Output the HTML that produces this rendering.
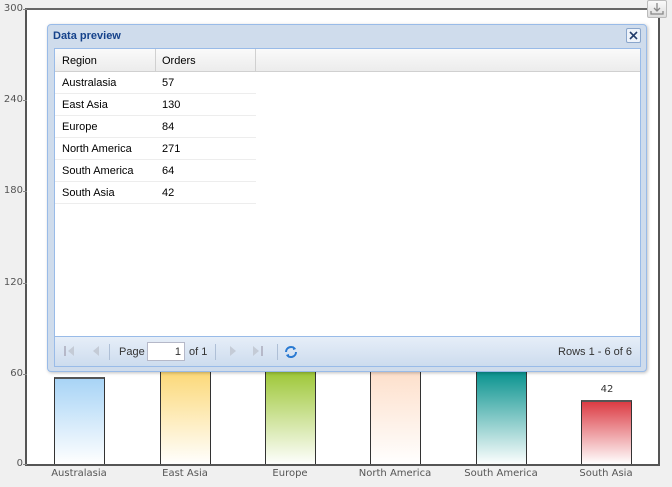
<!DOCTYPE html>
<html><head><style>
*{margin:0;padding:0;box-sizing:border-box}
body{width:672px;height:487px;background:#f0f0f0;font-family:"Liberation Sans",sans-serif;position:relative;overflow:hidden}
.a{position:absolute}
.yl{position:absolute;left:0;width:23px;text-align:right;color:#555;font-family:"DejaVu Sans",sans-serif;font-size:10px}
.tk{position:absolute;left:23px;width:4px;height:1px;background:#888}
.bar{position:absolute;width:51px;border:1px solid #333;border-bottom:none}
.xl{position:absolute;top:468px;font-family:"DejaVu Sans",sans-serif;font-size:10px;color:#555;text-align:center;width:110px}
.row{position:absolute;left:0;height:22px;font-size:11px;color:#000;border-bottom:1px solid #ededed}
.row span{position:absolute;top:5px}
</style></head><body>
<div class="a" style="left:25px;top:8px;width:635px;height:458px;background:#fff;border:2px solid #555;border-top:2px solid #666"></div>
<div class="yl" style="top:3px">300</div><div class="tk" style="top:9px"></div>
<div class="yl" style="top:94px">240</div><div class="tk" style="top:100px"></div>
<div class="yl" style="top:185px">180</div><div class="tk" style="top:191px"></div>
<div class="yl" style="top:277px">120</div><div class="tk" style="top:283px"></div>
<div class="yl" style="top:368px">60</div><div class="tk" style="top:374px"></div>
<div class="yl" style="top:458px">0</div><div class="tk" style="top:464px"></div>
<div class="bar" style="left:54px;top:377px;height:87px;background:linear-gradient(#a8d4f6,#fff);border-top:2px solid #555"></div>
<div class="bar" style="left:160px;top:200px;height:264px;background:linear-gradient(#fcd97a 0,#fcd97a 172px,#fff 264px)"></div>
<div class="bar" style="left:265px;top:200px;height:264px;background:linear-gradient(#9fc83a 0,#9fc83a 172px,#fff 264px)"></div>
<div class="bar" style="left:370px;top:200px;height:264px;background:linear-gradient(#fde0cc 0,#fde0cc 172px,#fff 264px)"></div>
<div class="bar" style="left:476px;top:200px;height:264px;background:linear-gradient(#0c9490 0,#0c9490 172px,#fff 264px)"></div>
<div class="bar" style="left:581px;top:400px;height:64px;background:linear-gradient(#dc3c44,#fff);border-top:2px solid #555"></div>
<div class="a" style="left:596px;top:384px;font-family:'DejaVu Sans',sans-serif;font-size:10px;color:#333;width:22px;text-align:center">42</div>
<div class="xl" style="left:24px">Australasia</div>
<div class="xl" style="left:130px">East Asia</div>
<div class="xl" style="left:235px">Europe</div>
<div class="xl" style="left:340px">North America</div>
<div class="xl" style="left:446px">South America</div>
<div class="xl" style="left:551px">South Asia</div>
<div class="a" style="left:647px;top:0;width:20px;height:18px;border:1px solid #bbb;border-radius:2px;background:linear-gradient(#fafafa,#ddd)">
<svg width="18" height="16" viewBox="0 0 18 16" style="position:absolute;left:0;top:0"><path d="M9 2v8M6 7l3 3 3-3M3 10v3h12v-3" stroke="#888" stroke-width="1.3" fill="none"/></svg></div>
<div class="a" style="left:47px;top:24px;width:600px;height:348px;background:#cfdcec;border:1px solid #99bbe8;border-radius:4px;box-shadow:1px 1px 3px rgba(0,0,0,.25)">
<div class="a" style="left:5px;top:5px;font-size:11px;font-weight:bold;color:#15428b">Data preview</div>
<div class="a" style="left:578px;top:3px;width:15px;height:15px;border:1px solid #8aa6cc;background:#eef3fa;border-radius:2px">
<svg width="13" height="13" viewBox="0 0 13 13" style="position:absolute;left:0;top:0"><path d="M3 3l7 7M10 3l-7 7" stroke="#223c6a" stroke-width="1.6"/></svg></div>
<div class="a" style="left:6px;top:23px;width:587px;height:289px;background:#fff;border:1px solid #99bbe8;overflow:hidden">
<div class="a" style="left:0;top:0;width:587px;height:23px;background:linear-gradient(#fafafa,#ececec);border-bottom:1px solid #d0d0d0;font-size:11px">
<span class="a" style="left:7px;top:6px">Region</span><div class="a" style="left:100px;top:0;width:1px;height:22px;background:#d0d0d0"></div>
<span class="a" style="left:107px;top:6px">Orders</span><div class="a" style="left:200px;top:0;width:1px;height:22px;background:#d0d0d0"></div></div>
<div class="a" style="left:0;top:23px;width:201px">
<div class="row" style="top:0;width:201px"><span style="left:7px">Australasia</span><span style="left:107px">57</span></div>
<div class="row" style="top:22px;width:201px"><span style="left:7px">East Asia</span><span style="left:107px">130</span></div>
<div class="row" style="top:44px;width:201px"><span style="left:7px">Europe</span><span style="left:107px">84</span></div>
<div class="row" style="top:66px;width:201px"><span style="left:7px">North America</span><span style="left:107px">271</span></div>
<div class="row" style="top:88px;width:201px"><span style="left:7px">South America</span><span style="left:107px">64</span></div>
<div class="row" style="top:110px;width:201px"><span style="left:7px">South Asia</span><span style="left:107px">42</span></div>
</div></div>
<div class="a" style="left:6px;top:312px;width:587px;height:30px;background:linear-gradient(#e6eef8,#cddcee);border:1px solid #99bbe8;border-top:none;font-size:11px;color:#333">
<svg width="60" height="16" style="position:absolute;left:8px;top:7px"><path d="M2 2v10" stroke="#aab" stroke-width="1.5"/><path d="M11 2l-6 5 6 5z" fill="#c4cbd6"/><path d="M36 2l-6 5 6 5z" fill="#c4cbd6"/></svg>
<div class="a" style="left:54px;top:7px;width:1px;height:16px;background:#aebfd6"></div>
<span class="a" style="left:64px;top:9px">Page</span>
<div class="a" style="left:92px;top:5px;width:38px;height:19px;background:#fff;border:1px solid #b5b8c8;text-align:right;padding:3px 3px 0 0">1</div>
<span class="a" style="left:134px;top:9px">of 1</span>
<div class="a" style="left:160px;top:7px;width:1px;height:16px;background:#aebfd6"></div>
<svg width="50" height="16" style="position:absolute;left:170px;top:7px"><path d="M5 2l6 5-6 5z" fill="#c4cbd6"/><path d="M28 2l6 5-6 5z" fill="#c4cbd6"/><path d="M37 2v10" stroke="#aab" stroke-width="1.5"/></svg>
<div class="a" style="left:222px;top:7px;width:1px;height:16px;background:#aebfd6"></div>
<svg width="16" height="16" style="position:absolute;left:228px;top:7px"><path d="M3 8a5 5 0 0 1 9-3M13 8a5 5 0 0 1-9 3" stroke="#2a7ad2" stroke-width="2" fill="none"/><path d="M10 2l3 3-3 1z M6 14l-3-3 3-1z" fill="#2a7ad2"/></svg>
<span class="a" style="right:8px;top:9px">Rows 1 - 6 of 6</span>
</div></div>
</body></html>
